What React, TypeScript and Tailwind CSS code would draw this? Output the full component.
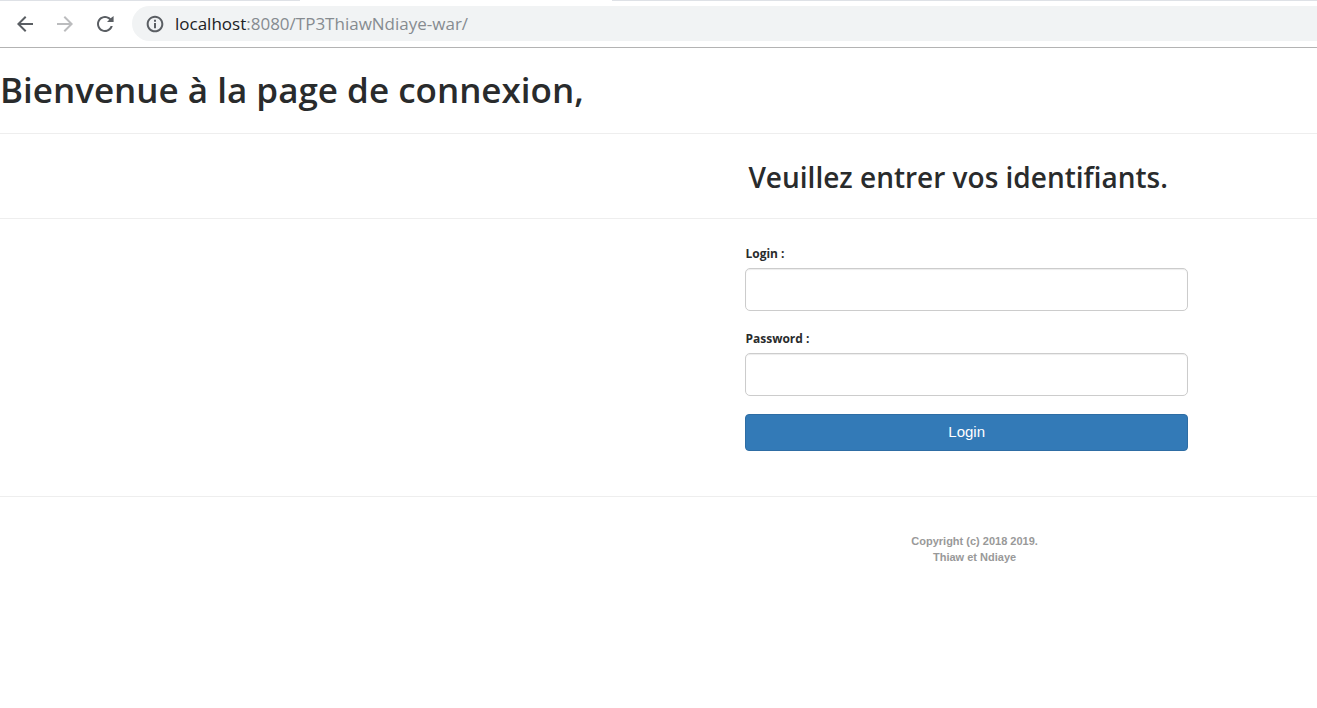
import React from "react";

function BrowserBar() {
  return (
    <header className="border-b border-[#b3b3b3] bg-white">
      <div className="flex h-px">
        <div className="w-[300px] bg-[#dee1e6]" />
        <div className="w-[312px]" />
        <div className="flex-1 bg-[#dee1e6]" />
      </div>
      <div className="flex items-center pt-[5px] pb-1.5 pl-[13px]">
        <nav className="mr-[15px] flex gap-4" aria-label="Navigation">
          <button type="button" aria-label="Back" className="text-[#5a5e63]">
            <svg className="size-6" viewBox="0 0 24 24" fill="currentColor">
              <path d="M20 11H7.83l5.59-5.59L12 4l-8 8 8 8 1.41-1.41L7.83 13H20v-2z" />
            </svg>
          </button>
          <button type="button" aria-label="Forward" className="text-[#bbbcbe]">
            <svg className="size-6" viewBox="0 0 24 24" fill="currentColor">
              <path d="M12 4l-1.41 1.41L16.17 11H4v2h12.17l-5.58 5.59L12 20l8-8z" />
            </svg>
          </button>
          <button type="button" aria-label="Reload" className="text-[#5a5e63]">
            <svg className="size-6" viewBox="0 0 24 24" fill="currentColor">
              <path d="M17.65 6.35C16.2 4.9 14.21 4 12 4c-4.42 0-7.99 3.58-7.99 8s3.57 8 7.99 8c3.73 0 6.84-2.55 7.73-6h-2.08c-.82 2.33-3.04 4-5.65 4-3.31 0-6-2.69-6-6s2.69-6 6-6c1.66 0 3.14.69 4.22 1.78L14 10h6.6V4l-2.95 2.35z" />
            </svg>
          </button>
        </nav>
        <div className="flex h-[35px] flex-1 items-center gap-2.5 rounded-l-full bg-[#f1f3f4] pl-[13px]">
          <svg className="size-5 text-[#5a5e63]" viewBox="0 0 24 24" fill="currentColor">
            <path d="M10.8 17.2h2.4v-6.4h-2.4v6.4zM12 2C6.48 2 2 6.48 2 12s4.48 10 10 10 10-4.48 10-10S17.52 2 12 2zm0 17.6c-4.2 0-7.6-3.4-7.6-7.6s3.4-7.6 7.6-7.6 7.6 3.4 7.6 7.6-3.4 7.6-7.6 7.6zM10.8 9.2h2.4V6.8h-2.4v2.4z" />
          </svg>
          <a href="#" className="text-[17px] leading-6 text-[#868b90]">
            <span className="text-[#202124]">localhost</span>:8080/TP3ThiawNdiaye-war/
          </a>
        </div>
      </div>
    </header>
  );
}

function Field({ id, label, type }: { id: string; label: string; type: string }) {
  return (
    <div className="flex flex-col">
      <label htmlFor={id} className="mb-[5px] text-[12px] leading-[19px] font-bold">
        {label}
      </label>
      <input
        id={id}
        type={type}
        className="h-[43px] w-full rounded-[5px] border border-[#ccc] bg-white px-3 shadow-[inset_0_1px_1px_rgba(0,0,0,0.075)] outline-none"
      />
    </div>
  );
}

export default function App() {
  return (
    <div className="min-h-screen bg-white font-['Open_Sans',sans-serif] text-[#292b2c]">
      <BrowserBar />
      <main>
        <h1 className="border-b border-[#eee] pt-4 pb-[17px] text-[35px] leading-[52px] font-semibold">
          Bienvenue à la page de connexion,
        </h1>
        <div className="border-b border-[#eee] pt-[23px] pb-[21px]">
          <h2 className="ml-[56.6%] pl-[3px] text-[28px] leading-10 font-semibold whitespace-nowrap">
            Veuillez entrer vos identifiants.
          </h2>
        </div>
        <div className="border-b border-[#eee] pt-[25px] pb-[45px]">
          <form
            className="ml-[56.6%] flex w-[33.6%] flex-col gap-[18px]"
            onSubmit={(event) => event.preventDefault()}
          >
            <Field id="login" label="Login :" type="text" />
            <Field id="password" label="Password :" type="password" />
            <button
              type="submit"
              className="h-[37px] rounded border border-[#2e6da4] bg-[#337ab7] font-['Liberation_Sans',sans-serif] text-[15px] text-white"
            >
              Login
            </button>
          </form>
        </div>
      </main>
      <footer className="ml-[56.6%] w-[34.8%] pt-9 text-center font-['Liberation_Sans',sans-serif] text-[11px] leading-4 font-bold text-[#999]">
        <p>Copyright (c) 2018 2019.</p>
        <p>Thiaw et Ndiaye</p>
      </footer>
    </div>
  );
}
